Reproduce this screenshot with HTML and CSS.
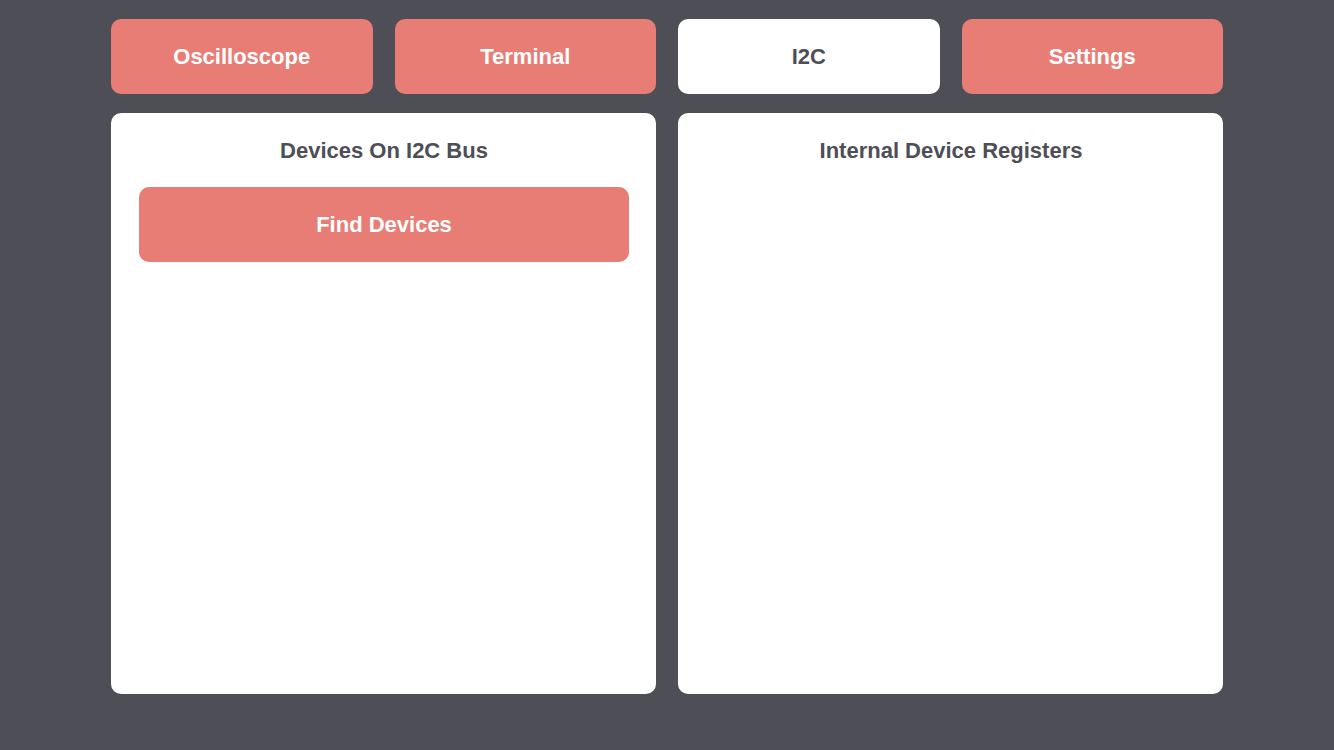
FILE: index.html
```html
<!DOCTYPE html>
<html>
<head>
<meta charset="utf-8">
<link rel="stylesheet" href="styles.css">
</head>
<body>
<div class="app">
  <nav class="tabs">
    <div class="tab">Oscilloscope</div>
    <div class="tab">Terminal</div>
    <div class="tab active">I2C</div>
    <div class="tab">Settings</div>
  </nav>
  <main class="panels">
    <section class="panel">
      <h2 class="panel-title">Devices On I2C Bus</h2>
      <div class="btn">Find Devices</div>
    </section>
    <section class="panel">
      <h2 class="panel-title">Internal Device Registers</h2>
    </section>
  </main>
</div>
</body>
</html>
```
FILE: styles.css
```css
html, body {
  margin: 0;
  padding: 0;
  background: #4e4e57;
  font-family: "Liberation Sans", Arial, sans-serif;
  font-weight: bold;
}
.app {
  width: 1112px;
  margin: 0 auto;
  padding-top: 19px;
}
.tabs {
  display: grid;
  grid-template-columns: repeat(4, 1fr);
  gap: 22px;
}
.tab {
  height: 75px;
  display: flex;
  align-items: center;
  justify-content: center;
  background: #e87d76;
  color: #fff;
  border-radius: 10px;
  font-size: 22px;
}
.tab.active {
  background: #fff;
  color: #4e4e57;
}
.panels {
  margin-top: 19px;
  display: grid;
  grid-template-columns: 1fr 1fr;
  gap: 22px;
}
.panel {
  background: #fff;
  border-radius: 10px;
  height: 581px;
  box-sizing: border-box;
  padding: 27px 27px 27px 28px;
}
.panel-title {
  margin: 0;
  text-align: center;
  color: #4e4e57;
  font-size: 22px;
  line-height: 21px;
}
.btn {
  margin-top: 26px;
  height: 75px;
  border-radius: 10px;
  background: #e87d76;
  color: #fff;
  font-size: 22px;
  display: flex;
  align-items: center;
  justify-content: center;
}
```
